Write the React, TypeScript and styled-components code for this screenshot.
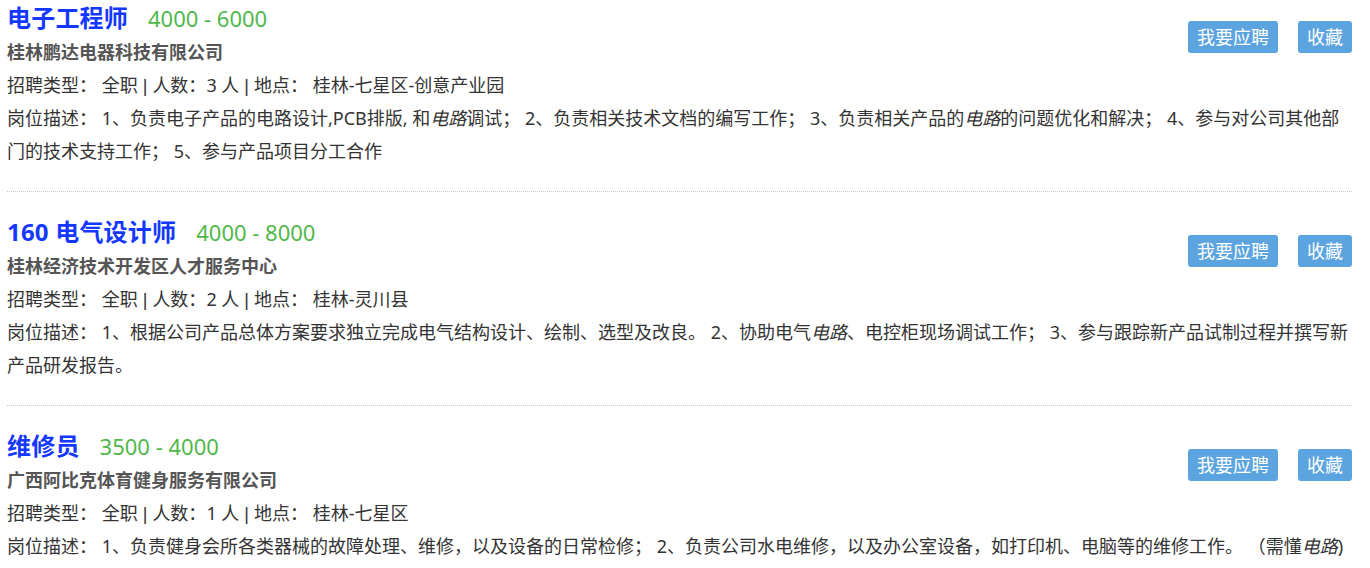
import * as React from 'react';
import styled, { createGlobalStyle } from 'styled-components';

type Job = {
    title: string;
    salary: string;
    company: string;
    type: string;
    count: number;
    place: string;
    desc: React.ReactNode;
};

const jobs: Job[] = [
    {
        title: '电子工程师',
        salary: '4000 - 6000',
        company: '桂林鹏达电器科技有限公司',
        type: '全职',
        count: 3,
        place: '桂林-七星区-创意产业园',
        desc: <>1、负责电子产品的电路设计,PCB排版, 和<em>电路</em>调试； 2、负责相关技术文档的编写工作； 3、负责相关产品的<em>电路</em>的问题优化和解决； 4、参与对公司其他部门的技术支持工作； 5、参与产品项目分工合作</>,
    },
    {
        title: '160 电气设计师',
        salary: '4000 - 8000',
        company: '桂林经济技术开发区人才服务中心',
        type: '全职',
        count: 2,
        place: '桂林-灵川县',
        desc: <>1、根据公司产品总体方案要求独立完成电气结构设计、绘制、选型及改良。 2、协助电气<em>电路</em>、电控柜现场调试工作； 3、参与跟踪新产品试制过程并撰写新产品研发报告。</>,
    },
    {
        title: '维修员',
        salary: '3500 - 4000',
        company: '广西阿比克体育健身服务有限公司',
        type: '全职',
        count: 1,
        place: '桂林-七星区',
        desc: <>1、负责健身会所各类器械的故障处理、维修，以及设备的日常检修； 2、负责公司水电维修，以及办公室设备，如打印机、电脑等的维修工作。 （需懂<em>电路</em>)</>,
    },
];

const App = () => {
    return (
        <>
            <GlobalStyle />
            <List>
                {jobs.map(job => (
                    <Item key={job.title}>
                        <Actions>
                            <Button>我要应聘</Button>
                            <Button>收藏</Button>
                        </Actions>
                        <Head>
                            <Title>{job.title}</Title>
                            <Salary>{job.salary}</Salary>
                        </Head>
                        <Company>{job.company}</Company>
                        <Line>
                            招聘类型： {job.type}<Sep> | </Sep>人数：{job.count} 人<Sep> | </Sep>地点： {job.place}
                        </Line>
                        <Line>岗位描述： {job.desc}</Line>
                    </Item>
                ))}
            </List>
        </>
    );
};

export default App;


/** styles below */

const GlobalStyle = createGlobalStyle`
    body {
        margin: 0;
        background: #fff;
        font-family: "Noto Sans", "Noto Sans CJK SC", sans-serif;
    }
`;

const List = styled.div`
    padding: 0 18px 0 7px;
`;

const Item = styled.div`
    padding: 22px 0 23px;
    border-bottom: 1px dotted #c8c8c8;

    &:first-child {
        padding-top: 0;
    }
`;

const Actions = styled.div`
    float: right;
    display: flex;
    gap: 20px;
    margin-top: 21px;
`;

const Button = styled.button`
    height: 32px;
    padding: 0 9px;
    border: none;
    border-radius: 3px;
    background: #5ca4e0;
    color: #fff;
    font-family: inherit;
    font-size: 18px;
    line-height: 32px;
    cursor: pointer;
`;

const Head = styled.div`
    display: flex;
    align-items: baseline;
    gap: 20px;
    height: 36px;
    line-height: 36px;
`;

const Title = styled.span`
    color: #1438ff;
    font-size: 24px;
    font-weight: bold;
    letter-spacing: 0.2px;
`;

const Salary = styled.span`
    color: #4fb84a;
    font-size: 22px;
`;

const Line = styled.div`
    color: #333;
    font-size: 18px;
    line-height: 33px;

    em {
        font-style: italic;
        line-height: 1;
    }
`;

const Sep = styled.span`
    font-family: "Liberation Sans", sans-serif;
    white-space: pre;
    line-height: 1;
`;

const Company = styled(Line)`
    color: #555;
    font-weight: bold;
`;
